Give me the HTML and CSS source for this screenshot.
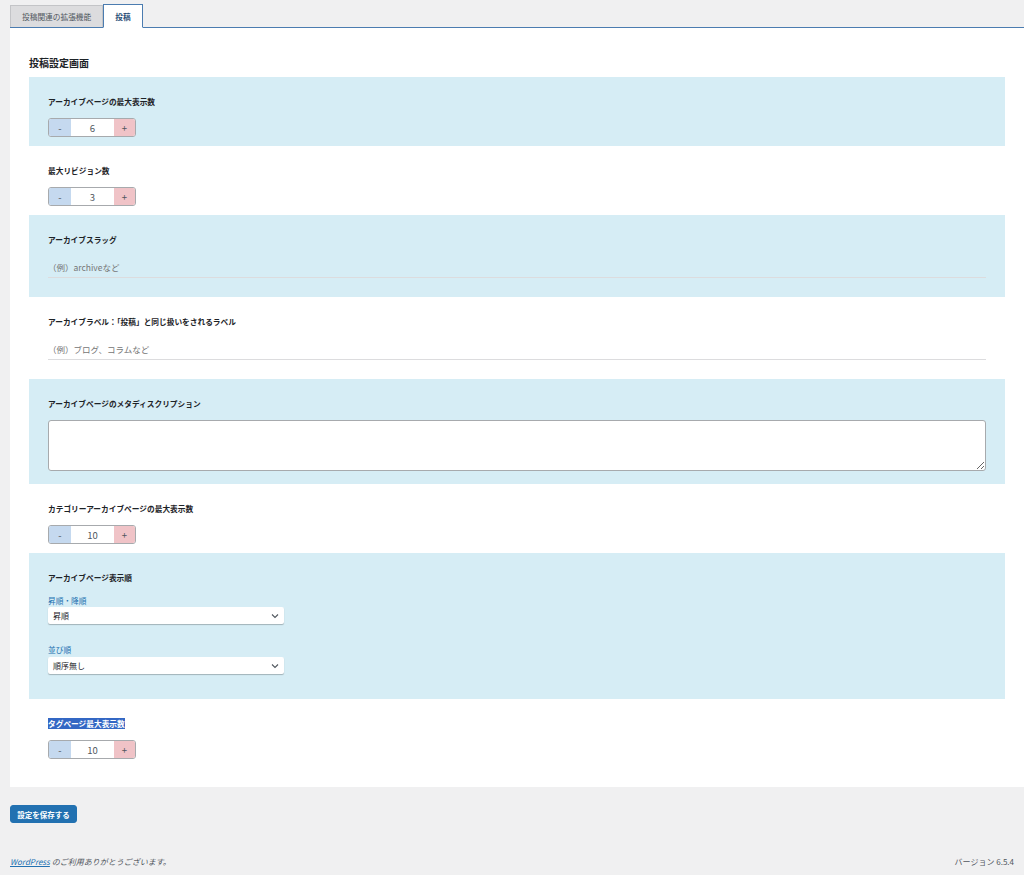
FILE: index.html
```html
<!DOCTYPE html>
<html lang="ja">
<head>
<meta charset="utf-8">
<title>投稿設定画面</title>
<link rel="stylesheet" href="styles.css">
</head>
<body>
<div class="wrap">
  <nav class="tabs">
    <a class="tab">投稿関連の拡張機能</a>
    <a class="tab active">投稿</a>
  </nav>
  <div class="panel">
    <h2 class="title">投稿設定画面</h2>

    <section class="field alt">
      <div class="label">アーカイブページの最大表示数</div>
      <div class="spin"><span class="minus">-</span><span class="val">6</span><span class="plus">+</span></div>
    </section>

    <section class="field">
      <div class="label">最大リビジョン数</div>
      <div class="spin"><span class="minus">-</span><span class="val">3</span><span class="plus">+</span></div>
    </section>

    <section class="field alt text">
      <div class="label">アーカイブスラッグ</div>
      <input class="line" type="text" placeholder="（例）archiveなど">
    </section>

    <section class="field text">
      <div class="label">アーカイブラベル：「投稿」と同じ扱いをされるラベル</div>
      <input class="line" type="text" placeholder="（例）ブログ、コラムなど">
    </section>

    <section class="field alt area">
      <div class="label">アーカイブページのメタディスクリプション</div>
      <textarea class="ta"></textarea>
    </section>

    <section class="field">
      <div class="label">カテゴリーアーカイブページの最大表示数</div>
      <div class="spin"><span class="minus">-</span><span class="val">10</span><span class="plus">+</span></div>
    </section>

    <section class="field alt order">
      <div class="label">アーカイブページ表示順</div>
      <div class="sub">昇順・降順</div>
      <div class="select">昇順</div>
      <div class="sub second">並び順</div>
      <div class="select">順序無し</div>
    </section>

    <section class="field last">
      <div class="label"><span class="hl">タグページ最大表示数</span></div>
      <div class="spin"><span class="minus">-</span><span class="val">10</span><span class="plus">+</span></div>
    </section>
  </div>
  <div class="actions"><button class="save">設定を保存する</button></div>
</div>
<footer class="foot">
  <span class="thanks"><a href="#">WordPress</a> のご利用ありがとうございます。</span>
  <span class="ver">バージョン 6.5.4</span>
</footer>
</body>
</html>
```
FILE: styles.css
```css
* { box-sizing: border-box; }
html, body { margin: 0; padding: 0; }
body {
  background: #f0f0f1;
  font-family: "Noto Sans CJK JP", "Noto Sans", sans-serif;
  font-size: 8px;
  color: #1d2327;
  width: 1024px;
  height: 875px;
  position: relative;
}
.wrap { padding-left: 10px; }
.tabs {
  display: flex;
  padding-top: 4px;
  height: 28px;
  align-items: flex-end;
  border-bottom: 1px solid #4b7cb0;
}
.tab {
  display: flex;
  align-items: center;
  justify-content: center;
  height: 22px;
  padding: 0 11px;
  background: #dcdcde;
  border: 1px solid #c3c4c7;
  border-bottom: none;
  color: #50575e;
  font-size: 7.7px;
}
.tab.active {
  height: 24px;
  background: #fff;
  border: 1px solid #4b7cb0;
  border-bottom: 1px solid #fff;
  margin-bottom: -1px;
  color: #2c4f78;
  font-weight: 700;
  padding: 0 11px;
}
.panel {
  background: #fff;
  padding: 20px 19px 0 19px;
  height: 759px;
}
.title {
  margin: 0;
  font-size: 10px;
  font-weight: 700;
  line-height: 29px;
  height: 29px;
  color: #1d2327;
}
.field {
  padding: 20px 19px 9px 19px;
}
.field.alt { background: #d6edf5; }
.label {
  font-weight: 700;
  font-size: 7.7px;
  line-height: 10px;
  height: 10px;
  color: #1d2327;
}
.spin {
  display: flex;
  margin-top: 11px;
  width: 88px;
  height: 19px;
  border: 1px solid #a7aaad;
  border-radius: 3px;
  overflow: hidden;
  background: #fff;
}
.spin span {
  display: flex;
  align-items: center;
  justify-content: center;
  font-size: 9.5px;
  color: #50575e;
}
.minus { width: 22px; background: #c5d9ef; }
.val { flex: 1; background: #fff; color: #1d2327; }
.plus { width: 21px; background: #f0c3c7; }
.field.text { padding-bottom: 19px; }
.line {
  display: block;
  width: 100%;
  margin-top: 11px;
  height: 22px;
  border: none;
  border-bottom: 1px solid #dcdcde;
  background: transparent;
  font-family: inherit;
  font-size: 8.5px;
  padding: 0;
  outline: none;
}
.line::placeholder { color: #757575; }
.field.area { padding-bottom: 13px; }
.ta {
  display: block;
  width: 100%;
  height: 51px;
  margin-top: 11px;
  border: 1px solid #a7aaad;
  border-radius: 3px;
  background: #fff;
  resize: vertical;
  font-family: inherit;
}
.field.order { padding-bottom: 25px; }
.sub {
  margin-top: 13px;
  color: #2271b1;
  font-size: 7.7px;
  line-height: 10px;
  height: 10px;
}
.sub.second { margin-top: 21px; }
.sub.second + .select { margin-top: 2px; }
.select {
  margin-top: 1px;
  width: 236px;
  height: 17px;
  background: #fff url("data:image/svg+xml;utf8,<svg xmlns='http://www.w3.org/2000/svg' width='10' height='10' viewBox='0 0 10 10'><path d='M2 3.5l3 3 3-3' fill='none' stroke='%2350575e' stroke-width='1.1'/></svg>") no-repeat right 4px center;
  border-radius: 2px;
  box-shadow: 0 1px 1px rgba(0,0,0,0.25);
  font-size: 8px;
  line-height: 17px;
  padding-left: 5px;
  color: #1d2327;
}
.field.last { padding-bottom: 29px; }
.hl { background: #3367c4; color: #fff; }
.actions { padding-top: 18px; }
.save {
  display: block;
  height: 18px;
  width: 67px;
  padding: 0;
  background: #2271b1;
  border: 1px solid #2271b1;
  border-radius: 3px;
  color: #fff;
  font-family: inherit;
  font-weight: 700;
  font-size: 7.5px;
}
.foot {
  position: absolute;
  left: 10px;
  right: 10px;
  top: 856px;
  display: flex;
  justify-content: space-between;
  font-size: 8px;
  color: #50575e;
}
.thanks { font-style: italic; }
.thanks a { color: #2271b1; }
```
